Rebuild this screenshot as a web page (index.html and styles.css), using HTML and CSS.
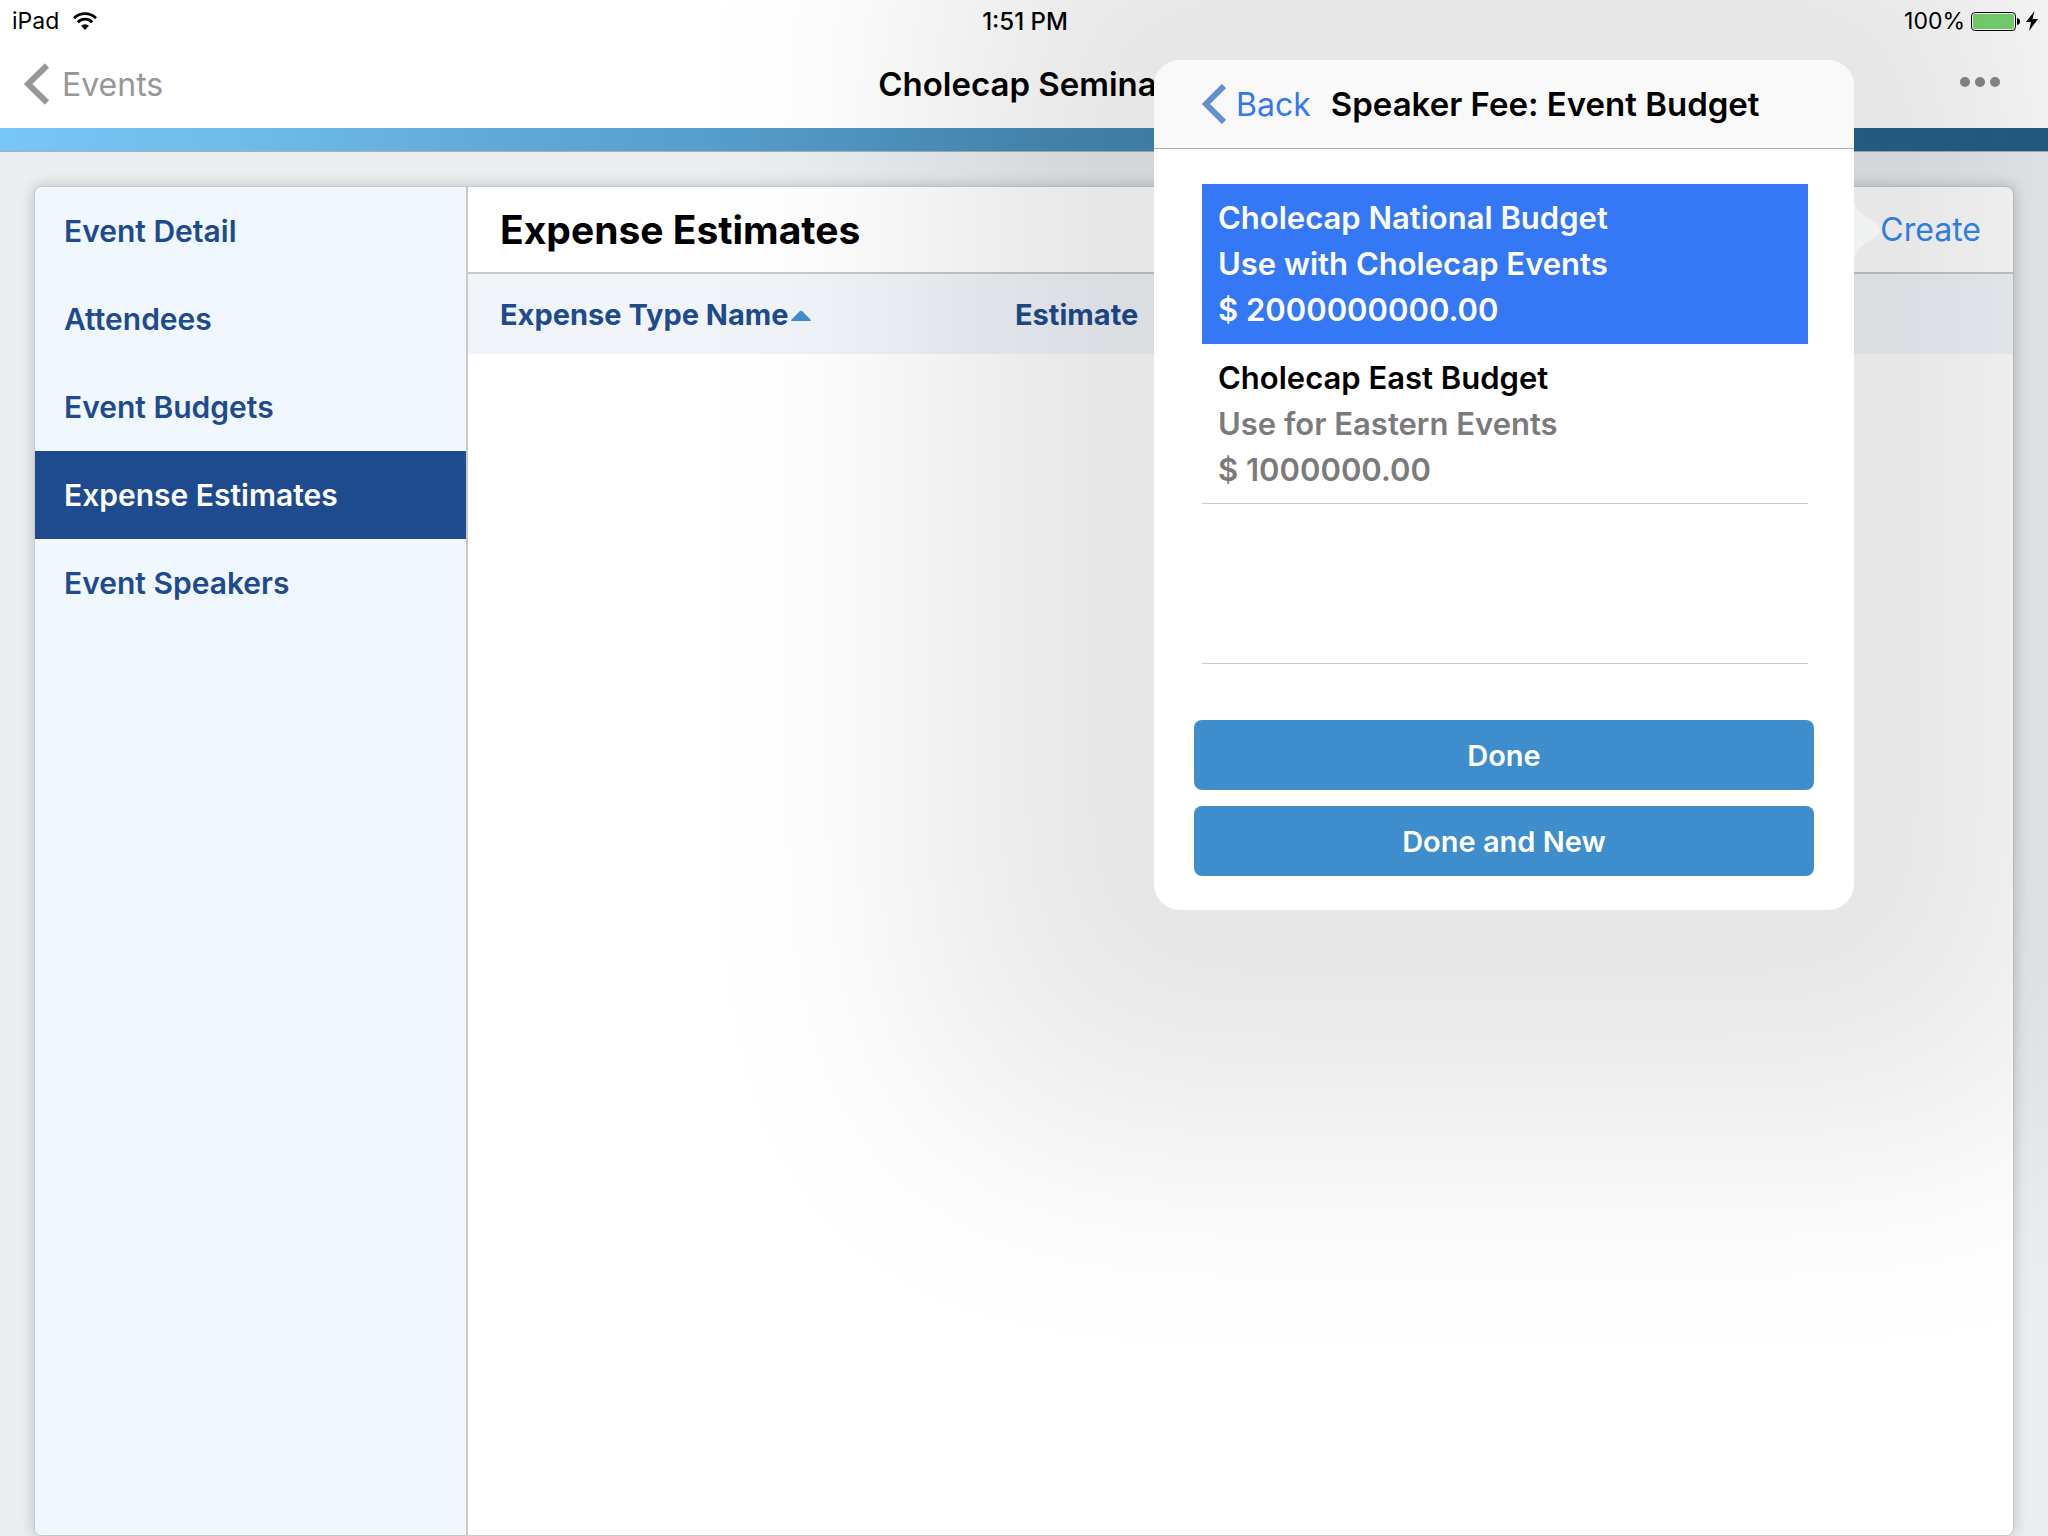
FILE: index.html
```html
<!DOCTYPE html>
<html lang="en">

<head>
  <meta charset="UTF-8" />
  <meta name="viewport" content="width=device-width, initial-scale=1.0" />
  <title>Expense Estimates</title>
  <link rel="stylesheet" href="styles.css">
</head>

<body>
  <div class="status-bar">
    <div class="status-left">
      <span>iPad</span>
      <svg class="wifi" width="24" height="18" viewBox="0 0 24 18" fill="none" stroke="#000">
        <path d="M1 6.2 A15.6 15.6 0 0 1 23 6.2" stroke-width="2.9" />
        <path d="M4.8 10.2 A10.2 10.2 0 0 1 19.2 10.2" stroke-width="2.8" />
        <path d="M12 18 L8 13.8 A5.7 5.7 0 0 1 16 13.8 Z" fill="#000" stroke="none" />
      </svg>
    </div>
    <div class="status-time">1:51 PM</div>
    <div class="status-right">
      <span>100%</span>
      <svg class="battery" width="49" height="19" viewBox="0 0 49 19">
        <rect x="0.5" y="0.5" width="44" height="18" rx="3.5" fill="#fff" stroke="#000" />
        <rect x="2" y="2" width="41" height="15" rx="2" fill="#78d771" />
        <path d="M46 6 Q49 6.5 49 9.5 Q49 12.5 46 13 Z" />
      </svg>
      <svg class="bolt" width="12" height="20" viewBox="0 0 12 20">
        <path d="M8.5 0 L0 11 H5 L3 20 L12 8 H6.5 Z" />
      </svg>
    </div>
  </div>

  <header class="nav-bar">
    <a class="nav-back" href="#">
      <svg width="26" height="42" viewBox="0 0 26 42" fill="none" stroke="#979797" stroke-width="6">
        <path d="M23 2.5 L4 21 L23 39.5" />
      </svg>
      Events
    </a>
    <h1 class="nav-title">Cholecap Seminar</h1>
    <button class="more-btn" aria-label="More">
      <svg width="40" height="10" viewBox="0 0 40 10" fill="#8b8b8b">
        <circle cx="5" cy="5" r="5" />
        <circle cx="20" cy="5" r="5" />
        <circle cx="35" cy="5" r="5" />
      </svg>
    </button>
  </header>
  <div class="stripe"></div>

  <main class="content">
    <div class="card">
      <nav class="sidebar">
        <a href="#">Event Detail</a>
        <a href="#">Attendees</a>
        <a href="#">Event Budgets</a>
        <a href="#" class="active">Expense Estimates</a>
        <a href="#">Event Speakers</a>
      </nav>
      <section class="panel">
        <div class="panel-header">
          <h2>Expense Estimates</h2>
          <button class="create-btn">Create</button>
        </div>
        <table class="estimates">
          <thead>
            <tr>
              <th>Expense Type Name<svg width="20" height="11" viewBox="0 0 20 11"><path d="M1 11 Q-1 11 1 9 L9 1 Q10 0 11 1 L19 9 Q21 11 19 11 Z" fill="#3f8ecf" /></svg></th>
              <th>Estimate</th>
              <th></th>
            </tr>
          </thead>
        </table>
      </section>
    </div>
  </main>

  <div class="popover">
    <svg class="popover-arrow" width="26" height="72" viewBox="0 0 26 72">
      <path d="M0 4 C0 22 20 24 25 32 Q27 36 25 40 C20 48 0 50 0 68 Z" fill="#f0f2f2" />
    </svg>
    <div class="popover-header">
      <a class="popover-back" href="#">
        <svg width="24" height="40" viewBox="0 0 24 40" fill="none" stroke="#658fd3" stroke-width="6">
          <path d="M22 2 L4 20 L22 38" />
        </svg>
        Back
      </a>
      <h2>Speaker Fee: Event Budget</h2>
    </div>
    <ul class="budget-list">
      <li>
        <button class="budget selected">
          <span class="budget-name">Cholecap National Budget</span>
          <span>Use with Cholecap Events</span>
          <span>$ 2000000000.00</span>
        </button>
      </li>
      <li>
        <button class="budget">
          <span class="budget-name">Cholecap East Budget</span>
          <span>Use for Eastern Events</span>
          <span>$ 1000000.00</span>
        </button>
      </li>
      <li></li>
    </ul>
    <div class="popover-actions">
      <button class="action-btn">Done</button>
      <button class="action-btn">Done and New</button>
    </div>
  </div>
</body>

</html>
```
FILE: styles.css
```css
* {
  box-sizing: border-box;
}

body {
  margin: 0;
  min-height: 100vh;
  display: flex;
  flex-direction: column;
  position: relative;
  overflow: hidden;
  background: #eaeef1;
  color: #000;
  font-family: Inter, "Liberation Sans", sans-serif;
}

h1,
h2 {
  margin: 0;
}

a {
  text-decoration: none;
}

button {
  padding: 0;
  border: none;
  background: none;
  font-family: inherit;
  cursor: pointer;
}

/* status bar */
.status-bar {
  display: grid;
  grid-template-columns: 1fr auto 1fr;
  align-items: center;
  height: 40px;
  padding: 2px 10px 0 12px;
  background: white;
  font-size: 23px;
}

.status-left,
.status-right {
  display: flex;
  align-items: center;
}

.status-left {
  gap: 14px;
}

.status-time {
  font-size: 24px;
  font-weight: 500;
}

.status-right {
  justify-content: flex-end;
  gap: 6px;
}

/* navigation bar */
.nav-bar {
  display: grid;
  grid-template-columns: 1fr auto 1fr;
  align-items: center;
  height: 88px;
  padding: 0 24px;
  background: white;
}

.nav-back {
  display: flex;
  align-items: center;
  gap: 12px;
  color: #979797;
  font-size: 32px;
}

.nav-title {
  font-size: 33px;
  font-weight: 600;
}

.more-btn {
  justify-self: end;
  height: 44px;
  margin: 0 24px 4px 0;
}

.stripe {
  height: 24px;
  border-bottom: 1px solid #a9b0b4;
  background: linear-gradient(to right, #78c6f7, #6fbbe9 12%, #62a9d9 24%, #5096c3 42%, #4689b3 56%, #2a648e 90%, #265d85);
}

/* main card */
.content {
  flex: 1;
  display: flex;
  padding: 34px 34px 0;
}

.card {
  flex: 1;
  display: flex;
  overflow: hidden;
  background: white;
  border: 1px solid #c8c9cb;
  border-radius: 8px;
  box-shadow: 0 0 14px rgba(0, 0, 0, 0.2);
}

.sidebar {
  width: 433px;
  border-right: 2px solid #c8c9cb;
  background: #f0f7ff;
}

.sidebar a {
  display: block;
  padding-left: 29px;
  color: #1e4b8d;
  font-size: 30px;
  font-weight: 600;
  line-height: 88px;
}

.sidebar a.active {
  background: #1e4b8d;
  color: white;
}

.panel {
  flex: 1;
}

.panel-header {
  display: flex;
  justify-content: space-between;
  align-items: center;
  height: 87px;
  padding: 0 32px;
  border-bottom: 2px solid #c8c9cb;
}

.panel-header h2 {
  font-size: 39px;
  font-weight: 700;
}

.create-btn {
  color: #3589f0;
  font-size: 32px;
}

.estimates {
  width: 100%;
  table-layout: fixed;
  border-collapse: collapse;
}

.estimates th {
  height: 80px;
  padding: 0 32px;
  background: #f1f5f9;
  color: #1e4b8d;
  font-size: 29px;
  font-weight: 700;
  text-align: left;
  white-space: nowrap;
}

.estimates svg {
  margin: 0 0 4px 2px;
}

/* popover */
.popover {
  position: absolute;
  top: 60px;
  right: 194px;
  width: 700px;
  background: white;
  border-radius: 26px;
  box-shadow: 0 0 380px 215px rgba(0, 0, 0, 0.1);
}

.popover-arrow {
  position: absolute;
  top: 134px;
  left: 100%;
}

.popover-header {
  display: flex;
  align-items: center;
  gap: 20px;
  height: 89px;
  padding-left: 48px;
  border-bottom: 1px solid #aeafb1;
  border-radius: 26px 26px 0 0;
  background: #f9f9f9;
}

.popover-header h2 {
  font-size: 33px;
  font-weight: 600;
}

.popover-back {
  display: flex;
  align-items: center;
  gap: 10px;
  color: #3478f6;
  font-size: 32px;
}

.budget-list {
  margin: 0;
  padding: 35px 46px 0 48px;
  list-style: none;
}

.budget-list li {
  height: 160px;
  border-bottom: 1px solid #c8c8ca;
}

.budget-list li:first-child {
  border-bottom: none;
}

.budget {
  display: block;
  width: 100%;
  height: 100%;
  padding: 0 16px;
  color: #7b7b7b;
  font-size: 31px;
  font-weight: 600;
  line-height: 46px;
  text-align: left;
}

.budget span {
  display: block;
}

.budget-name {
  color: #000;
}

.budget.selected,
.budget.selected .budget-name {
  background: #3478f6;
  color: white;
}

.popover-actions {
  display: flex;
  flex-direction: column;
  gap: 16px;
  padding: 56px 40px 34px;
}

.action-btn {
  height: 70px;
  border-radius: 8px;
  background: #3e8dcd;
  color: white;
  font-size: 29px;
  font-weight: 600;
}
```
